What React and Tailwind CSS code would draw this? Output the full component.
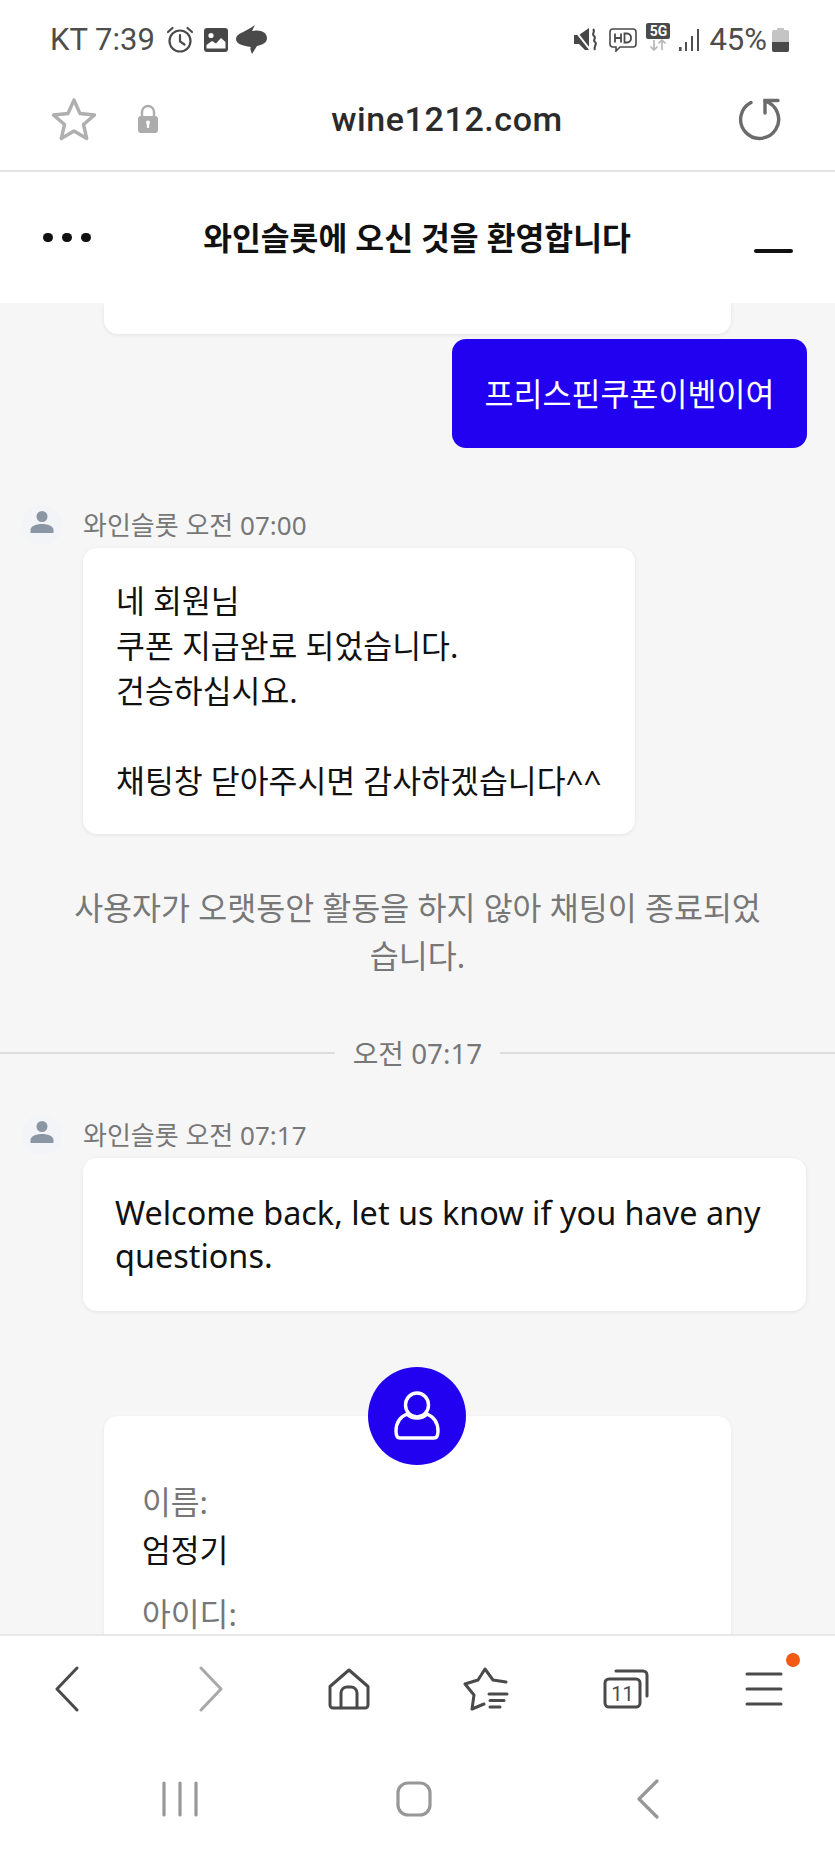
import React from 'react'

const kr = 'font-["Noto_Sans","Noto_Sans_CJK_KR",sans-serif]'
const rb = 'font-["Roboto","Noto_Sans_CJK_KR",sans-serif]'

const StatusLeft = () => (
  <div className="flex items-center">
    <span className={`${rb} text-[31px] leading-[32px] text-[#4d4d4d]`}>KT 7:39</span>
    <svg width="28" height="28" viewBox="0 0 28 28" fill="none" stroke="#4a4a4a" strokeWidth="2.2" className="ml-[11px]">
      <circle cx="14" cy="15" r="10.5" />
      <path d="M14 9v6.5l4.5 3M2 6l4.5-4M26 6l-4.5-4" strokeLinecap="round" />
    </svg>
    <svg width="26" height="26" viewBox="0 0 26 26" className="ml-[9px]">
      <rect x="1" y="1" width="24" height="24" rx="3" fill="#484848" />
      <circle cx="8" cy="8.5" r="2.6" fill="#fff" />
      <path d="M3.5 21.5 L3.5 18 L9 14 L13 16.5 L18 11 L22.5 15 V21.5Z" fill="#fff" />
    </svg>
    <svg width="32" height="30" viewBox="0 0 32 30" className="ml-[7px]">
      <path d="M19 0 L16 6 C24 4 31 7 31 13 C31 18 26 20 21 21 L16 29 C14 24 14 23 15 22 C7 21 0 19 0 14 C0 8 10 7 19 0Z" fill="#4a4a4a" />
    </svg>
  </div>
)

const StatusRight = () => (
  <div className="flex items-center">
    <svg width="24" height="26" viewBox="0 0 24 26" fill="#474747">
      <path d="M0 8h5l10-7v22l-4 0-6-6H0z" />
      <path d="M0 2l17 22" stroke="#fff" strokeWidth="2" />
      <path d="M19 2c3 3-2 5 1 7s-2 4 1 6-2 4 0 8" fill="none" stroke="#474747" strokeWidth="2" />
    </svg>
    <svg width="28" height="24" viewBox="0 0 28 24" fill="none" className="ml-[11px]">
      <path d="M4 1h20a3 3 0 0 1 3 3v12a3 3 0 0 1-3 3H11l-4 4v-4H4a3 3 0 0 1-3-3V4a3 3 0 0 1 3-3z" stroke="#4a4a4a" strokeWidth="1.6" />
      <path d="M6 5.5v9M12 5.5v9M6 10h6M15.5 5.5v9h2.5a4 4 0 0 0 4-4.5 4 4 0 0 0-4-4.5z" stroke="#4a4a4a" strokeWidth="1.8" />
    </svg>
    <div className="flex flex-col items-center ml-[9px] -mt-[6px]">
      <div className="w-[24px] h-[16px] bg-[#4a4a4a] rounded-[2px] text-white text-[14px] leading-[16px] font-bold text-center font-['Roboto',sans-serif]">5G</div>
      <svg width="20" height="12" viewBox="0 0 20 12" fill="none" stroke="#b5b5b5" strokeWidth="1.6">
        <path d="M6 1v10M2.5 7.5 6 11l3.5-3.5M14 11V1M10.5 4.5 14 1l3.5 3.5" />
      </svg>
    </div>
    <svg width="22" height="24" viewBox="0 0 22 24" fill="#4f4f4f" className="ml-[8px]">
      <rect x="1" y="19" width="2.6" height="4" />
      <rect x="7" y="14" width="2" height="9" />
      <rect x="13" y="8" width="2" height="15" />
      <rect x="19" y="1" width="2" height="22" />
    </svg>
    <span className={`${rb} text-[31px] leading-[32px] text-[#4d4d4d] ml-[9px]`}>45%</span>
    <svg width="17" height="24" viewBox="0 0 17 24" className="ml-[5px]">
      <path d="M5 0h7v2h3a2 2 0 0 1 2 2v18a2 2 0 0 1-2 2H2a2 2 0 0 1-2-2V4a2 2 0 0 1 2-2h3z" fill="#c4c4c4" />
      <path d="M0 14h17v8a2 2 0 0 1-2 2H2a2 2 0 0 1-2-2z" fill="#4a4a4a" />
    </svg>
  </div>
)

const BrowserBar = () => (
  <div className="relative flex items-center h-[98px] pl-[51px] pr-[53px] pb-[7px] border-b-2 border-[#e4e4e4] bg-white">
    <svg width="46" height="44" viewBox="0 0 46 44" fill="none" stroke="#afafaf" strokeWidth="3.4" strokeLinejoin="round">
      <path d="M23 3l6 13.5 14.5 1.5-11 9.5 3.2 14L23 34l-12.700 7.500 3.200-14-11-9.500L17 16.500z" />
    </svg>
    <svg width="22" height="30" viewBox="0 0 22 30" className="ml-[40px]">
      <path d="M5 13V8a6 6 0 0 1 12 0v5" fill="none" stroke="#acacac" strokeWidth="2.4" />
      <rect x="1" y="12" width="20" height="17" rx="3" fill="#acacac" />
      <rect x="9.800" y="18" width="2.400" height="6" rx="1" fill="#fff" />
      <circle cx="11" cy="18.500" r="2" fill="#fff" />
    </svg>
    <span className={`${rb} text-[34px] leading-[40px] font-medium text-[#2b2b2b] tracking-[0.6px] flex-1 text-center pr-[3px]`}>wine1212.com</span>
    <svg width="44" height="44" viewBox="0 0 44 44" fill="none" stroke="#6b6b6b" strokeWidth="3.4" strokeLinecap="round">
      <path d="M13 5.500A19 19 0 1 0 27 4.200" />
      <path d="M27 16V3.500h13" />
    </svg>
  </div>
)

const ChatHeader = () => (
  <div className="flex items-center h-[131px] bg-white pl-[43px] pr-[42px] shrink-0">
    <div className="flex gap-[9.500px] w-[48px]">
      <span className="w-[9.500px] h-[9.500px] rounded-full bg-[#111]" />
      <span className="w-[9.500px] h-[9.500px] rounded-full bg-[#111]" />
      <span className="w-[9.500px] h-[9.500px] rounded-full bg-[#111]" />
    </div>
    <h1 className={`${kr} flex-1 text-center text-[31.300px] leading-[40px] font-bold text-[#111] pr-[11px]`}>와인슬롯에 오신 것을 환영합니다</h1>
    <span className="w-[39px] h-[4.500px] rounded-full bg-[#111] mt-[27px]" />
  </div>
)

const AgentHead = ({ time }) => (
  <div className="flex items-center h-[40px]">
    <div className="w-[40px] h-[40px] rounded-full bg-[#f2f4f7] ml-[22px] flex items-center justify-center">
      <svg width="26" height="24" viewBox="0 0 26 24" fill="#8a96a3" className="-mt-[6px]">
        <circle cx="13" cy="6.500" r="5.500" />
        <path d="M1.500 23v-3c0-4 6-6 11.500-6s11.500 2 11.500 6v3z" />
      </svg>
    </div>
    <span className={`${kr} text-[26px] leading-[34px] text-[#777] ml-[21px]`}>와인슬롯 {time}</span>
  </div>
)

const Bubble = ({ className, children }) => (
  <div className={`bg-white rounded-[14px] shadow-[0_1px_4px_rgba(0,0,0,0.08)] text-[#111] ${kr} ${className}`}>
    {children}
  </div>
)

const ChatArea = () => (
  <div className="flex-1 min-h-0 overflow-hidden bg-[#f6f6f7] flex flex-col">
    <div className="h-[31px] w-[627px] ml-[104px] shrink-0 bg-white rounded-b-[14px] shadow-[0_1px_4px_rgba(0,0,0,0.08)]" />

    <div className={`self-end mr-[28px] mt-[5px] w-[355px] h-[109px] shrink-0 bg-[#2200f0] rounded-[14px] flex items-center justify-center text-white text-[31.500px] ${kr}`}>
      프리스핀쿠폰이벤이여
    </div>

    <div className="mt-[57px]">
      <AgentHead time="오전 07:00" />
    </div>
    <Bubble className="ml-[83px] mt-[3px] w-[552px] h-[286px] shrink-0 pl-[33px] pt-[30px] text-[31.400px] leading-[45px]">
      네 회원님<br />쿠폰 지급완료 되었습니다.<br />건승하십시요.<br /><br />채팅창 닫아주시면 감사하겠습니다^^
    </Bubble>

    <p className={`${kr} mt-[50px] mx-[70px] text-center text-[31.500px] leading-[48px] text-[#777] break-all`}>
      사용자가 오랫동안 활동을 하지 않아 채팅이 종료되었습니다.
    </p>

    <div className="flex items-center mt-[56px]">
      <div className="flex-1 h-[2px] bg-[#dcdcdc]" />
      <span className={`${kr} px-[18px] text-[27.800px] leading-[34px] text-[#777]`}>오전 07:17</span>
      <div className="flex-1 h-[2px] bg-[#dcdcdc]" />
    </div>

    <div className="mt-[45px]">
      <AgentHead time="오전 07:17" />
    </div>
    <Bubble className="ml-[83px] mt-[3px] w-[723px] h-[153px] shrink-0 pl-[32px] pr-[30px] pt-[33px] text-[32.400px] leading-[43px]">
      Welcome back, let us know if you have any questions.
    </Bubble>

    <div className="relative mt-[105px] ml-[104px] w-[627px] h-[300px] shrink-0 bg-white rounded-t-[14px] shadow-[0_1px_4px_rgba(0,0,0,0.06)] pl-[38px] pt-[66px]">
      <div className="absolute left-[264px] -top-[49px] w-[98px] h-[98px] rounded-full bg-[#2200f0] flex items-center justify-center">
        <svg width="48" height="50" viewBox="0 0 48 50" fill="none" stroke="#fff" strokeWidth="3.400" strokeLinejoin="round">
          <ellipse cx="24" cy="14" rx="11.500" ry="12" />
          <path d="M14 23C7 26 3 32 3 40c0 4 1 7 4 7h34c3 0 4-3 4-7 0-8-4-14-11-17-3 3-6 4-10 4s-7-1-10-4z" />
        </svg>
      </div>
      <div className={`${kr} text-[31.300px] leading-[40px] text-[#777]`}>이름:</div>
      <div className={`${kr} text-[31.300px] leading-[44px] text-[#111] mt-[6px]`}>엄정기</div>
      <div className={`${kr} text-[31.300px] leading-[40px] text-[#777] mt-[22px]`}>아이디:</div>
    </div>
  </div>
)

const BottomNav = () => (
  <div className="bg-white border-t-2 border-[#e8e8e8] shrink-0">
    <div className="flex items-center h-[106px] relative">
      <div className="w-[135px] flex justify-center">
        <svg width="26" height="46" viewBox="0 0 26 46" fill="none" stroke="#4a4a4a" strokeWidth="3" strokeLinecap="round" strokeLinejoin="round" className="-ml-[1px]">
          <path d="M23 2 3 23l20 21" />
        </svg>
      </div>
      <div className="w-[156px] flex justify-center -ml-[2px]">
        <svg width="26" height="46" viewBox="0 0 26 46" fill="none" stroke="#a8a8a8" strokeWidth="3" strokeLinecap="round" strokeLinejoin="round">
          <path d="M3 2l20 21L3 44" />
        </svg>
      </div>
      <div className="w-[120px] flex justify-center">
        <svg width="42" height="42" viewBox="0 0 42 42" fill="none" stroke="#4a4a4a" strokeWidth="3" strokeLinejoin="round">
          <path d="M2 18.500 21 2l19 16.500V37a3 3 0 0 1-3 3H5a3 3 0 0 1-3-3z" />
          <path d="M13 40V25a6 6 0 0 1 6-6h4a6 6 0 0 1 6 6v15" />
        </svg>
      </div>
      <div className="w-[154px] flex justify-center">
        <svg width="46" height="44" viewBox="0 0 46 44" fill="none" stroke="#4a4a4a" strokeWidth="3" strokeLinecap="round" strokeLinejoin="round">
          <path d="M43 15 30 13 22 2 15 13 2 17l9 11-2 14 12-5" />
          <path d="M26 27h18M27 33.500h14M27 40h10" />
        </svg>
      </div>
      <div className="w-[126px] flex justify-center">
        <svg width="46" height="40" viewBox="0 0 46 40" fill="none" stroke="#4a4a4a" strokeWidth="3" strokeLinecap="round">
          <path d="M13 2h27a4 4 0 0 1 4 4v21" />
          <rect x="2" y="10" width="35" height="28" rx="4" />
          <text x="19.500" y="32" textAnchor="middle" fontSize="20" fill="#4a4a4a" stroke="none" fontFamily="Roboto, sans-serif">11</text>
        </svg>
      </div>
      <div className="flex-1 flex justify-center pl-[4px]">
        <svg width="38" height="36" viewBox="0 0 38 36" fill="none" stroke="#4a4a4a" strokeWidth="3" strokeLinecap="round">
          <path d="M2 3h34M2 18h34M2 33h34" />
        </svg>
      </div>
      <span className="absolute right-[35px] top-[17px] w-[14px] h-[14px] rounded-full bg-[#f15a14]" />
    </div>
    <div className="flex items-center h-[114px] pl-[63px]">
      <div className="w-[234px] flex justify-center">
        <svg width="36" height="36" viewBox="0 0 36 36" fill="none" stroke="#979797" strokeWidth="3.200" strokeLinecap="round">
          <path d="M2 2v32M18 2v32M34 2v32" />
        </svg>
      </div>
      <div className="w-[234px] flex justify-center">
        <svg width="36" height="36" viewBox="0 0 36 36" fill="none" stroke="#979797" strokeWidth="3.200">
          <rect x="2" y="2" width="32" height="32" rx="10" />
        </svg>
      </div>
      <div className="w-[234px] flex justify-center">
        <svg width="24" height="40" viewBox="0 0 24 40" fill="none" stroke="#979797" strokeWidth="3.200" strokeLinecap="round" strokeLinejoin="round">
          <path d="M21 2 3 20l18 18" />
        </svg>
      </div>
    </div>
  </div>
)

const App = () => (
  <div className="w-[835px] h-[1856px] flex flex-col overflow-hidden bg-white">
    <div className="shrink-0">
      <div className="flex items-center justify-between h-[74px] pl-[50px] pr-[46px] pt-[6px] bg-white">
        <StatusLeft />
        <StatusRight />
      </div>
      <BrowserBar />
    </div>
    <ChatHeader />
    <ChatArea />
    <BottomNav />
  </div>
)

export default App
